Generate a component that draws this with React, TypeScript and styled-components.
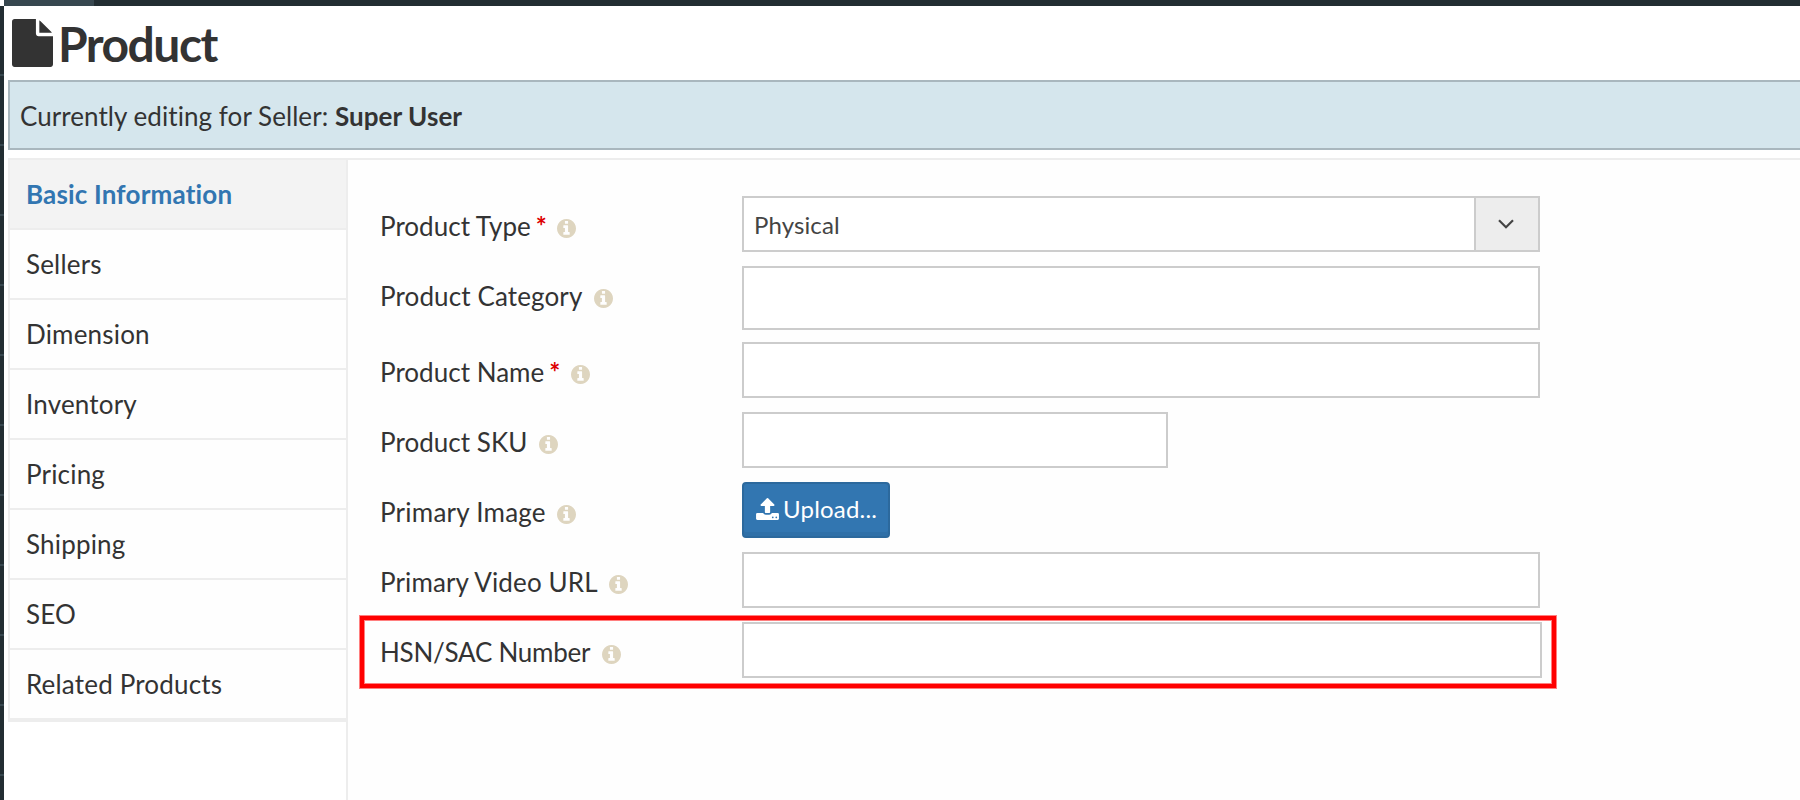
import React from 'react';
import styled, { createGlobalStyle } from 'styled-components';

const GlobalStyle = createGlobalStyle`
  * { box-sizing: border-box; }
  body {
    margin: 0;
    background: #fff;
    color: #333;
    font-family: Lato, 'Liberation Sans', sans-serif;
    font-size: 26px;
    letter-spacing: 0.12px;
    font-variant-ligatures: none;
    overflow: hidden;
  }
`;

const Page = styled.div`
  display: grid;
  grid-template-columns: 4px 1fr;
  grid-template-rows: 6px 1fr;
  width: 1800px;
  height: 800px;
  overflow: hidden;
`;

const TopBar = styled.div`
  grid-column: 2;
  display: flex;
  background: #222d32;
`;

const TopBarBrand = styled.div`
  width: 90px;
  background: #37474f;
`;

const SideStrip = styled.div`
  grid-column: 1;
  background: repeating-linear-gradient(#222d32 0 68px, #37474f 68px 70px);
`;

const Content = styled.main`
  display: flex;
  flex-direction: column;
  padding-left: 4px;
  min-width: 0;
`;

const Heading = styled.h1`
  display: flex;
  align-items: flex-start;
  height: 74px;
  margin: 0;
  padding: 13px 0 0 4px;
  font-size: 48px;
  line-height: 50px;
  font-weight: 700;
  letter-spacing: -1.5px;
  color: #333;

  svg { margin-right: 5px; }
`;

const Notice = styled.div`
  height: 70px;
  margin-bottom: 8px;
  padding: 1px 10px 0;
  line-height: 66px;
  letter-spacing: 0.06px;
  background: #d5e6ed;
  border: 2px solid #a9b7be;
  border-right: 0;
`;

const Panel = styled.section`
  flex: 1;
  display: flex;
  border-top: 2px solid #ededed;
`;

const Sidebar = styled.nav`
  width: 340px;
  border-right: 2px solid #ededed;
`;

const TabList = styled.ul`
  margin: 0;
  padding: 0;
  list-style: none;
  border-left: 2px solid #ededed;
  border-bottom: 2px solid #ededed;
`;

const Tab = styled.li<{ $active?: boolean }>`
  height: 70px;
  padding-left: 16px;
  line-height: 68px;
  letter-spacing: 0.18px;
  border-bottom: 2px solid #ededed;
  background: ${p => (p.$active ? '#f3f3f3' : '#fefefe')};
  color: ${p => (p.$active ? '#3276b1' : '#333')};
  font-weight: ${p => (p.$active ? 700 : 400)};
`;

const Form = styled.form`
  position: relative;
  flex: 1;
  padding: 36px 0 0 32px;
  background: #fefefe;
`;

const Field = styled.div<{ $height?: number; $gap?: number }>`
  display: flex;
  align-items: flex-start;
  height: ${p => p.$height ?? 56}px;
  margin-bottom: ${p => p.$gap ?? 14}px;
`;

const Label = styled.label<{ $tracking?: number }>`
  display: flex;
  align-items: center;
  width: 362px;
  line-height: 60px;
  letter-spacing: ${p => p.$tracking ?? 0.12}px;

  svg { margin: 5px 0 0 11.5px; }
`;

const Required = styled.span`
  margin-left: 5px;
  margin-right: -1px;
  font-weight: 700;
  letter-spacing: 0;
  color: #d00;
`;

const Input = styled.input<{ $width?: number }>`
  width: ${p => p.$width ?? 798}px;
  height: 100%;
  padding: 0 10px;
  border: 2px solid #ccc;
  border-radius: 0;
  background: #fff;
  font: inherit;
`;

const Select = styled.div`
  display: flex;
  justify-content: space-between;
  width: 798px;
  height: 56px;
  padding-left: 10px;
  border: 2px solid #ccc;
  background: #fff;
  font-size: 24px;
  line-height: 54px;
  color: #444;
`;

const SelectArrow = styled.span`
  display: flex;
  align-items: center;
  justify-content: center;
  width: 64px;
  padding-right: 2px;
  border-left: 2px solid #ccc;
  background: #ededed;
`;

const UploadButton = styled.button`
  display: flex;
  align-items: center;
  width: 148px;
  height: 56px;
  padding: 0 0 3px 12px;
  border: 2px solid #2c699d;
  border-radius: 4px;
  background: #3276b1;
  box-shadow: inset 0 -4px 0 rgba(0, 0, 0, 0.05);
  color: #fff;
  font: 24px Lato, 'Liberation Sans', sans-serif;
  letter-spacing: 0.2px;

  svg { margin-right: 4px; }
`;

const Highlight = styled.div`
  position: absolute;
  top: 456px;
  left: 12px;
  width: 1196px;
  height: 72px;
  border: 4px solid #f00;
  box-shadow: 0 0 0 1px rgba(255, 0, 0, 0.5), inset 0 0 0 1px rgba(255, 0, 0, 0.5);
  pointer-events: none;
`;

const FileIcon = () => (
  <svg width="41" height="48" viewBox="128 0 1536 1792" fill="#333">
    <path d="M1152 512v-472q22 14 36 28l408 408q14 14 28 36h-472zm-128 32q0 40 28 68t68 28h544v1056q0 40-28 68t-68 28h-1344q-40 0-68-28t-28-68v-1600q0-40 28-68t68-28h800v544z" />
  </svg>
);

const InfoIcon = () => (
  <svg width="19" height="19" viewBox="128 128 1536 1536" fill="#ded5bf">
    <path d="M1152 1376v-160q0-14-9-23t-23-9h-96v-512q0-14-9-23t-23-9h-320q-14 0-23 9t-9 23v160q0 14 9 23t23 9h96v320h-96q-14 0-23 9t-9 23v160q0 14 9 23t23 9h448q14 0 23-9t9-23zm-128-896v-160q0-14-9-23t-23-9h-192q-14 0-23 9t-9 23v160q0 14 9 23t23 9h192q14 0 23-9t9-23zm640 416q0 209-103 385.5t-279.5 279.5-385.5 103-385.5-103-279.5-279.5-103-385.5 103-385.5 279.5-279.5 385.5-103 385.5 103 279.5 279.5 103 385.5z" />
  </svg>
);

const UploadIcon = () => (
  <svg width="23" height="22" viewBox="64 64 1664 1600" fill="#fff">
    <path d="M1344 1472q0-26-19-45t-45-19-45 19-19 45 19 45 45 19 45-19 19-45zm256 0q0-26-19-45t-45-19-45 19-19 45 19 45 45 19 45-19 19-45zm128-224v320q0 40-28 68t-68 28h-1472q-40 0-68-28t-28-68v-320q0-40 28-68t68-28h427q21 56 70.5 92t110.5 36h256q61 0 110.5-36t70.5-92h427q40 0 68 28t28 68zm-325-648q-17 39-59 39h-256v448q0 26-19 45t-45 19h-256q-26 0-45-19t-19-45v-448h-256q-42 0-59-39-17-40 14-69l448-448q18-19 45-19t45 19l448 448q31 29 14 69z" />
  </svg>
);

const ChevronIcon = () => (
  <svg width="16" height="10" viewBox="0 0 16 10" fill="none" stroke="#444" strokeWidth="2.2">
    <path d="M1 1.2l7 7 7-7" />
  </svg>
);

const tabs = ['Basic Information', 'Sellers', 'Dimension', 'Inventory', 'Pricing', 'Shipping', 'SEO', 'Related Products'];

const FieldLabel = ({ text, required, tracking }: { text: string; required?: boolean; tracking?: number }) => (
  <Label $tracking={tracking}>
    {text}
    {required && <Required>*</Required>}
    <InfoIcon />
  </Label>
);

export default function App() {
  return (
    <Page>
      <GlobalStyle />
      <TopBar><TopBarBrand /></TopBar>
      <SideStrip />
      <Content>
        <Heading><FileIcon />Product</Heading>
        <Notice>Currently editing for Seller: <strong>Super User</strong></Notice>
        <Panel>
          <Sidebar>
            <TabList>
              {tabs.map((tab, i) => <Tab key={tab} $active={i === 0}>{tab}</Tab>)}
            </TabList>
          </Sidebar>
          <Form>
            <Field>
              <FieldLabel text="Product Type" required tracking={0.02} />
              <Select>Physical<SelectArrow><ChevronIcon /></SelectArrow></Select>
            </Field>
            <Field $height={64} $gap={12}>
              <FieldLabel text="Product Category" />
              <Input />
            </Field>
            <Field>
              <FieldLabel text="Product Name" required tracking={0.02} />
              <Input />
            </Field>
            <Field>
              <FieldLabel text="Product SKU" tracking={0.04} />
              <Input $width={426} />
            </Field>
            <Field>
              <FieldLabel text="Primary Image" tracking={0.24} />
              <UploadButton type="button"><UploadIcon />Upload...</UploadButton>
            </Field>
            <Field>
              <FieldLabel text="Primary Video URL" />
              <Input />
            </Field>
            <Field>
              <FieldLabel text="HSN/SAC Number" tracking={-0.25} />
              <Input $width={800} />
            </Field>
            <Highlight />
          </Form>
        </Panel>
      </Content>
    </Page>
  );
}
